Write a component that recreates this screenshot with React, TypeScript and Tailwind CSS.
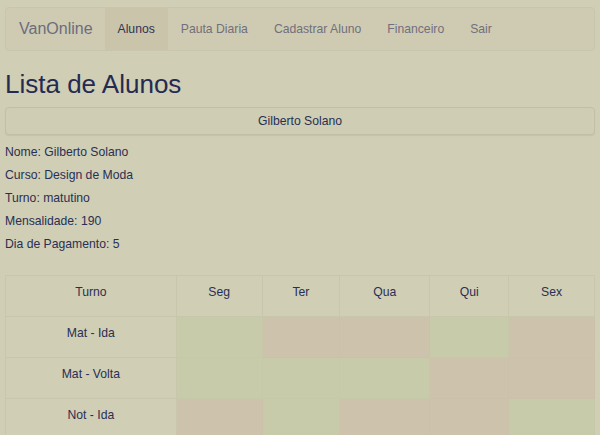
import React from 'react';

const navItems = ['Alunos', 'Pauta Diaria', 'Cadastrar Aluno', 'Financeiro', 'Sair'];

const dias = ['Seg', 'Ter', 'Qua', 'Qui', 'Sex'];

// true = confirmado (verde), false = ausente (vermelho)
const pauta = [
  { turno: 'Mat - Ida', dias: [true, false, false, true, false] },
  { turno: 'Mat - Volta', dias: [true, true, true, false, false] },
  { turno: 'Not - Ida', dias: [false, true, false, false, true] },
];

const aluno = [
  'Nome: Gilberto Solano',
  'Curso: Design de Moda',
  'Turno: matutino',
  'Mensalidade: 190',
  'Dia de Pagamento: 5',
];

const App: React.FC = () => {
  return (
    <div
      className="min-h-[435px] bg-[#d0ceb4] px-[5px] pt-[7px] text-[12.2px] text-[#2a2f55]"
      style={{ fontFamily: '"Liberation Sans", Arial, sans-serif' }}
    >
      <nav className="flex h-[44px] items-stretch rounded border border-[#c7c5ab] bg-[#cecbb2]">
        <span className="flex items-center pl-[13px] pr-[12px] text-[16px] text-[#6d6b7c]">VanOnline</span>
        {navItems.map((item, i) => (
          <span
            key={item}
            className={
              i === 0
                ? 'flex items-center bg-[#c9c4aa] px-[13px] text-[12.2px] text-[#2f3356]'
                : 'flex items-center px-[13px] text-[12.2px] text-[#726f7c]'
            }
          >
            {item}
          </span>
        ))}
      </nav>

      <h1 className="mt-[16px] text-[26px] leading-[34px] text-[#242a52]">Lista de Alunos</h1>

      <div className="mt-[6px] flex h-[28px] items-center justify-center rounded border border-[#c1bfa6] bg-[#cfcdb3] shadow-[0_1px_1px_rgba(0,0,0,0.06)]">
        Gilberto Solano
      </div>

      <div className="mt-[6px] flex flex-col">
        {aluno.map((linha) => (
          <p key={linha} className="leading-[23px]">{linha}</p>
        ))}
      </div>

      <table className="mt-[19px] w-[590px] border-collapse">
        <thead>
          <tr className="h-[41px]">
            <th className="w-[171px] border border-[#c8c6ac] pt-[8px] align-top font-normal leading-[17px]">Turno</th>
            <th className="w-[86px] border border-[#c8c6ac] pt-[8px] align-top font-normal leading-[17px]">Seg</th>
            <th className="w-[78px] border border-[#c8c6ac] pt-[8px] align-top font-normal leading-[17px]">Ter</th>
            <th className="w-[90px] border border-[#c8c6ac] pt-[8px] align-top font-normal leading-[17px]">Qua</th>
            <th className="w-[79px] border border-[#c8c6ac] pt-[8px] align-top font-normal leading-[17px]">Qui</th>
            <th className="w-[86px] border border-[#c8c6ac] pt-[8px] align-top font-normal leading-[17px]">Sex</th>
          </tr>
        </thead>
        <tbody>
          {pauta.map((linha) => (
            <tr key={linha.turno} className="h-[41px]">
              <td className="border border-[#c8c6ac] pt-[8px] text-center align-top leading-[17px]">{linha.turno}</td>
              {linha.dias.map((ok, j) => (
                <td
                  key={dias[j]}
                  className={ok ? 'border border-[#c6c8aa] bg-[#c8cbaa]' : 'border border-[#cbc1aa] bg-[#cdc2ab]'}
                />
              ))}
            </tr>
          ))}
        </tbody>
      </table>
    </div>
  );
};

export default App;
